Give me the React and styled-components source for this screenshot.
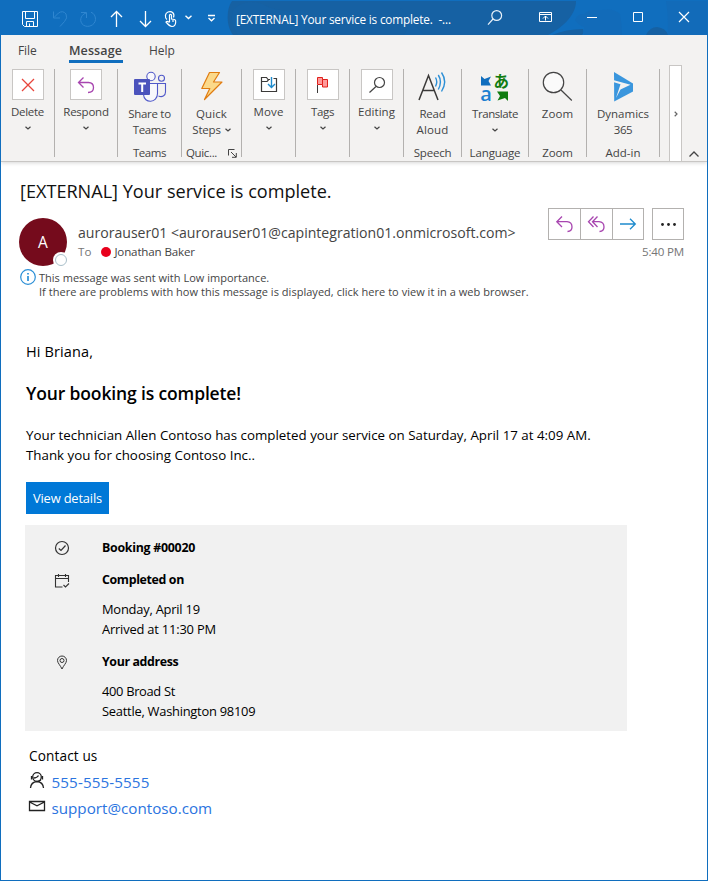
import React from 'react';
import styled, { createGlobalStyle } from 'styled-components';

const Global = createGlobalStyle`
  *, *::before, *::after { box-sizing: border-box; }
  body { margin: 0; background: #fff; font-family: "Open Sans", "Noto Sans", sans-serif; }
  svg { display: block; flex: none; overflow: visible; }
`;

/* ---------- primitives ---------- */

const Text = styled.span`
  font-size: ${p => p.$size || 11.5}px;
  line-height: ${p => p.$lh || 16}px;
  letter-spacing: ${p => p.$ls || 0}px;
  font-weight: ${p => p.$weight || 400};
  color: ${p => p.$color || 'inherit'};
  white-space: pre;
`;

function Icon({ box, children, ...rest }) {
  const [, , w, h] = box.split(' ');
  return (
    <svg width={w} height={h} viewBox={box} fill="none" {...rest}>
      {children}
    </svg>
  );
}

const Window = styled.div`
  width: 708px;
  height: 881px;
  border: 1px solid #106ebe;
  background: #fff;
  display: flex;
  flex-direction: column;
  overflow: hidden;
`;

/* ---------- title bar ---------- */

const TitleBar = styled.header`
  position: relative;
  height: 34px;
  flex: none;
  display: flex;
  align-items: stretch;
  padding: 0 4px 0 14px;
  background: #106ebe;
  color: #fff;
`;

const Backdrop = styled.svg`
  position: absolute;
  inset: 0;
`;

const Slot = styled.div`
  position: relative;
  width: ${p => p.$w}px;
  flex: none;
  display: flex;
  justify-content: center;
  padding-top: ${p => p.$top}px;
`;

const Caption = styled.div`
  position: relative;
  flex: 1;
  display: flex;
  align-items: flex-start;
  padding: 9.500px 0 0 11px;
`;

function TitleArea() {
  const s = { stroke: '#fff' };
  return (
    <TitleBar>
      <Backdrop width="706" height="34" viewBox="1 1 706 34" preserveAspectRatio="none">
        <path d="M232 1C226 9 226 26 233 35H548C565 26 576 14 576 1Z" fill="#1661a3" />
        <path d="M234 9Q246 -2 262 4Q280 14 304 10Q312 22 300 35H238Q228 20 234 9ZM400 8Q415 18 404 35H424Q410 20 400 8Z" fill="#1562a6" />
        <path d="M552 35Q566 29 583 29Q584 33 582 35ZM646 35Q650 27 657 27Q666 28 668 35Z" fill="#1661a3" />
        <path d="M575 20Q578 13 584 14L590 10L602 10Q614 8 620 14Q622 24 622 35H584V27Q578 25 575 20ZM666 1H707V35H668Q668 12 666 1Z" fill="#126bb9" />
      </Backdrop>
      <Slot $w={30} $top={10}>
        <Icon box="22 11 16 16" {...s}>
          <path d="M22.5 11.5H37.5V26.5H24.5L22.5 24.5ZM25.5 11.5V18.5H34.5V11.5M26.5 26.5V21.5H33.5V26.5M29.5 23.5V26.5" />
        </Icon>
      </Slot>
      <Slot $w={29} $top={10}>
        <Icon box="51 11 16 16" stroke="#2f86d0">
          <path d="M52.5 11.5V18H59M53 17.5L57.5 13Q62 10 65 14Q67 18 63.5 21.5L59 26.5" />
        </Icon>
      </Slot>
      <Slot $w={28} $top={10}>
        <Icon box="80 11 16 16" stroke="#2f86d0">
          <path d="M81 12.5H86.5V18M86 13C80 15 79 22 83.500 25.200C88 28 95 25.500 95.500 19.500Q95.500 14 91 12.200" />
        </Icon>
      </Slot>
      <Slot $w={29} $top={10}>
        <Icon box="110 11 13 16" stroke="#fff" strokeWidth="1.3">
          <path d="M116.500 27V11.500M111 17L116.500 11.500L122 17" />
        </Icon>
      </Slot>
      <Slot $w={29} $top={10}>
        <Icon box="139 11 13 16" stroke="#fff" strokeWidth="1.3">
          <path d="M145.500 11V26.500M140 21L145.500 26.500L151 21" />
        </Icon>
      </Slot>
      <Slot $w={20} $top={10}>
        <Icon box="164 11 13 16" stroke="#fff" strokeWidth="1.2">
          <path d="M167 19.500C164.500 17.500 165 13 168 12C172 10.600 175 13.500 173.500 17.500" />
          <path d="M169.500 22V15Q170.500 13.600 171.500 15V19L174.500 19.500Q176 20 175.700 22Q175.500 26.500 172 26.500Q169.500 26.300 166 22Q167 20.500 169.500 22.500M173 20V22" />
        </Icon>
      </Slot>
      <Slot $w={17} $top={14}>
        <Icon box="185 15 7 5" stroke="#fff" strokeWidth="1.4">
          <path d="M185.500 15.700L188.500 18.500L191.500 15.700" />
        </Icon>
      </Slot>
      <Slot $w={28} $top={13}>
        <Icon box="207 14 8 8" stroke="#fff" strokeWidth="1.300">
          <path d="M208 15.500H215M208.500 18L211.500 20.800L214.500 18" />
        </Icon>
      </Slot>
      <Caption>
        <Text $size={11.8} $ls={-0.18}>{'[EXTERNAL] Your service is complete.  -...'}</Text>
      </Caption>
      <Slot $w={46} $top={9}>
        <Icon box="487 10 16 16" stroke="#e8f1f9" strokeWidth="1.2">
          <circle cx="496.700" cy="15.500" r="4.900" />
          <path d="M493 19L488 24.700" />
        </Icon>
      </Slot>
      <Slot $w={55} $top={11}>
        <Icon box="539 12 13 10" stroke="#fff">
          <path d="M539.500 12.500H551.500V21.500H539.500ZM539.500 14.500H551.500M545.500 20.500V16M543 18.500L545.500 16L548 18.500" />
        </Icon>
      </Slot>
      <Slot $w={38} $top={16}>
        <Icon box="587 17 10 1" stroke="#fff"><path d="M587 17.500H597" /></Icon>
      </Slot>
      <Slot $w={54} $top={11}>
        <Icon box="633 12 10 10" stroke="#fff"><path d="M633.500 12.500H642.500V21.500H633.500Z" /></Icon>
      </Slot>
      <Slot $w={38} $top={11}>
        <Icon box="679 12 10 10" stroke="#fff" strokeWidth="1.2"><path d="M679 12L689 22M689 12L679 22" /></Icon>
      </Slot>
    </TitleBar>
  );
}

/* ---------- ribbon ---------- */

const Ribbon = styled.section`
  flex: none;
  height: 127px;
  background: #f3f2f1;
  border-bottom: 1px solid #c8c6c4;
  box-shadow: 0 1px 4px rgba(0, 0, 0, 0.16);
  color: #444;
  display: flex;
  flex-direction: column;
`;

const Tabs = styled.nav`
  display: flex;
  height: 30px;
  padding: 7.5px 0 0 17px;
`;

const Tab = styled.div`
  width: ${p => p.$w}px;
  height: 20.500px;
  display: flex;
`;

const ActiveTab = styled(Tab)`
  width: 54px;
  margin-right: 26px;
  border-bottom: 3px solid #106ebe;
`;

const Groups = styled.div`
  display: flex;
  align-items: flex-start;
`;

const Group = styled.div`
  width: ${p => p.$w}px;
  height: 96px;
  padding-top: 4px;
  flex: none;
  display: flex;
  flex-direction: column;
  align-items: center;
`;

const Divider = styled.div`
  width: 1px;
  height: 88px;
  margin-top: 4px;
  flex: none;
  background: #b3b1af;
`;

const TileIcon = styled.div`
  width: 32px;
  height: 31px;
  margin-bottom: 4px;
  border: 1px solid #c8c6c4;
  background: #fff;
  display: flex;
  align-items: center;
  justify-content: center;
`;

const LargeIcon = styled.div`
  height: 36.500px;
  display: flex;
  align-items: flex-start;
  padding-top: 3px;
`;

const Line = styled.div`
  height: 16px;
  display: flex;
  align-items: center;
  gap: 4px;
`;

const GroupName = styled.div`
  height: 16px;
  margin-top: auto;
  display: flex;
  align-items: center;
  gap: 11px;
`;

const ScrollRight = styled.div`
  width: 13px;
  height: 96px;
  margin-left: 9px;
  border: 1px solid #c8c6c4;
  border-bottom: 0;
  background: #fff;
  display: flex;
  align-items: center;
  justify-content: center;
`;

const Collapse = styled.div`
  height: 96px;
  padding: 86px 0 0 7px;
`;

const Chevron = () => (
  <Icon box="0 0 6 4" stroke="#444" strokeWidth="1.200"><path d="M0.500 0.700L3 2.900L5.500 0.700" /></Icon>
);

function SmallGroup({ w, label, ls, children }) {
  return (
    <>
      <Group $w={w}>
        <TileIcon>{children}</TileIcon>
        <Line><Text $ls={ls}>{label}</Text></Line>
        <Line><Chevron /></Line>
      </Group>
      <Divider />
    </>
  );
}

function LargeGroup({ w, icon, lines, name, nameLs, chevronInline, chevronBelow, launcher }) {
  return (
    <>
      <Group $w={w}>
        <LargeIcon>{icon}</LargeIcon>
        {lines.map(([t, ls], i) => (
          <Line key={t}>
            <Text $ls={ls}>{t}</Text>
            {chevronInline && i === lines.length - 1 && <Chevron />}
          </Line>
        ))}
        {chevronBelow && <Line><Chevron /></Line>}
        <GroupName>
          <Text $ls={nameLs}>{name}</Text>
          {launcher && (
            <Icon box="0 0 9 9" stroke="#444"><path d="M0.500 6.500V0.500H6.500M3 3L8 8M8.300 4V8.300H4" /></Icon>
          )}
        </GroupName>
      </Group>
      <Divider />
    </>
  );
}

const TeamsIcon = () => (
  <Icon box="134 72 32 30" stroke="#5059c9" strokeWidth="1.100">
    <circle cx="151" cy="76.500" r="4.200" fill="#f8f8fc" />
    <circle cx="161.500" cy="78.200" r="3" />
    <path d="M157.500 83.500H165.500V92C165.500 96 162 97.500 158.500 96" />
    <path d="M144 83.500H157.500V93.500C157.500 103.500 144 104 143.500 94.500" fill="#f8f8fc" />
    <rect x="134" y="79" width="16" height="16" rx="1" fill="#4b53bc" stroke="none" />
    <path d="M138.500 83.500H146M142.200 83.500V92" stroke="#fff" strokeWidth="2" />
  </Icon>
);

const BoltIcon = () => (
  <Icon box="201 73 22 28" stroke="#e07c10" strokeWidth="1.200" strokeLinejoin="round">
    <path d="M209.500 73.500H219.500L213.500 83H222L204.500 100.500L209.800 89.500H201.800Z" fill="#fbd98a" />
  </Icon>
);

const ReadAloudIcon = () => (
  <Icon box="420 73 28 29">
    <path d="M420 101L429.500 76.500L439 101M423.800 91.500H435.300" stroke="#3b3a39" strokeWidth="1.500" />
    <path d="M436.500 78.500Q439 82.500 436.500 87.500M439.300 76Q443.500 82.500 439.300 90.500M442.500 73.500Q448.800 82.500 442.500 92.500" stroke="#2b8fd6" strokeWidth="1.400" />
  </Icon>
);

const Kana = styled.text`
  font: 700 15.500px "Noto Sans CJK JP", sans-serif;
`;

const Latin = styled.text`
  font: 600 20px "Open Sans", sans-serif;
`;

const TranslateIcon = () => (
  <Icon box="480 72 30 30">
    <path d="M481 76L484.500 79L491 76.500L488.500 81L491 85.500H481Z" fill="#106ebe" />
    <Latin x="480.300" y="101" fill="#1b7fd0">a</Latin>
    <Kana x="493.500" y="87" fill="#107c10">あ</Kana>
    <path d="M497 91.500H508V101L505 98L497.500 100.500L500 96Z" fill="#107c10" />
  </Icon>
);

const ZoomIcon = () => (
  <Icon box="543 73 31 29" stroke="#444" strokeWidth="1.200">
    <circle cx="554.500" cy="83.500" r="10.200" fill="#fafafa" />
    <path d="M562 91L572.800 101.500" />
  </Icon>
);

const DynamicsIcon = () => (
  <Icon box="613 72 20 30">
    <path d="M614 72L633 83.500V91.500L614.200 101.500Z" fill="#3a96dd" />
    <path d="M614 80.200L630.500 84.800L620.500 89.500L616 98L620.500 84.300L614 82.300Z" fill="#f3f2f1" />
  </Icon>
);

function RibbonArea() {
  return (
    <Ribbon>
      <Tabs>
        <Tab $w={51}><Text $size={12} $ls={-0.08}>File</Text></Tab>
        <ActiveTab><Text $size={12.5} $weight={600} $ls={0.1}>Message</Text></ActiveTab>
        <Tab><Text $size={12}>Help</Text></Tab>
      </Tabs>
      <Groups>
        <SmallGroup w={53} label="Delete" ls={-0.29}>
          <Icon box="22 78 12 12" stroke="#e8453c" strokeWidth="1.300"><path d="M22 78L34 90M34 78L22 90" /></Icon>
        </SmallGroup>
        <SmallGroup w={62} label="Respond" ls={-0.23}>
          <Icon box="78 76 16 16" stroke="#a846b0" strokeWidth="1.300">
            <path d="M83.500 76.500L78.500 81.500L83.500 86.500M78.500 81.500H88.500Q93.500 81.800 93.500 86.500Q93.500 91.500 88 91.500" />
          </Icon>
        </SmallGroup>
        <LargeGroup w={63} icon={<TeamsIcon />} lines={[['Share to', -0.3], ['Teams', -0.4]]} name="Teams" nameLs={-0.45} />
        <LargeGroup w={59} icon={<BoltIcon />} lines={[['Quick', 0.1], ['Steps', -0.22]]} chevronInline name="Quic..." nameLs={-0.35} launcher />
        <SmallGroup w={53} label="Move" ls={0.13}>
          <Icon box="261 76 16 15" stroke="#3b3a39" strokeWidth="1.200">
            <path d="M273.500 77.500H276.500V90.500H261.500V76.500H266.500L268 78.500H270M261.500 80.500H267L268.500 79" />
            <path d="M271.500 76V86.500M268 83L271.500 86.500L275 83" stroke="#1e8bcd" strokeWidth="1.400" />
          </Icon>
        </SmallGroup>
        <SmallGroup w={53} label="Tags" ls={-0.3}>
          <Icon box="317 76 12 16">
            <path d="M317.500 76.500H322.500V78.500H327.500V86H322.500V83.500H317.500Z" fill="#ff9a9a" stroke="#e0201b" />
            <path d="M322.500 78.500V83.500" stroke="#e0201b" />
            <path d="M317.500 84V92" stroke="#3b3a39" />
          </Icon>
        </SmallGroup>
        <SmallGroup w={53} label="Editing" ls={0.05}>
          <Icon box="369 76 16 16" stroke="#444" strokeWidth="1.200">
            <circle cx="379.500" cy="81.500" r="5" />
            <path d="M376 85.500L369.500 91.500" />
          </Icon>
        </SmallGroup>
        <LargeGroup w={57} icon={<ReadAloudIcon />} lines={[['Read', -0.25], ['Aloud', 0.15]]} name="Speech" nameLs={-0.2} />
        <LargeGroup w={66} icon={<TranslateIcon />} lines={[['Translate', -0.42]]} chevronBelow name="Language" nameLs={-0.12} />
        <LargeGroup w={57} icon={<ZoomIcon />} lines={[['Zoom', 0.1]]} name="Zoom" nameLs={-0.2} />
        <LargeGroup w={72} icon={<DynamicsIcon />} lines={[['Dynamics', 0], ['365', -0.4]]} name="Add-in" nameLs={0} />
        <ScrollRight>
          <Icon box="0 0 4 6" stroke="#666" strokeWidth="1.200"><path d="M0.700 0.800L3 3L0.700 5.200" /></Icon>
        </ScrollRight>
        <Collapse>
          <Icon box="689 151 10 6" stroke="#444" strokeWidth="1.300"><path d="M689.500 156.500L694 152L698.500 156.500" /></Icon>
        </Collapse>
      </Groups>
    </Ribbon>
  );
}

/* ---------- message header ---------- */

const MessageHeader = styled.section`
  height: 141px;
  flex: none;
  padding: 17px 23px 0 18px;
  display: flex;
  flex-direction: column;
`;

const Subject = styled.h1`
  margin: 0;
  height: 29px;
  padding-left: 1px;
  font-weight: 400;
  display: flex;
`;

const SenderRow = styled.div`
  height: 60px;
  display: flex;
  align-items: flex-start;
`;

const Avatar = styled.div`
  position: relative;
  width: 48px;
  height: 48px;
  margin-top: 10px;
  border-radius: 50%;
  background: #750b1c;
  color: #fff;
  display: flex;
  align-items: center;
  justify-content: center;
`;

const Presence = styled.span`
  position: absolute;
  left: 36px;
  top: 36px;
  width: 12px;
  height: 12px;
  border-radius: 50%;
  border: 1px solid #a9bfca;
  background: #fff;
  box-shadow: 0 0 0 2px #fff;
`;

const Sender = styled.div`
  flex: 1;
  padding: 15px 0 0 11px;
  display: flex;
  flex-direction: column;
  color: #444;
`;

const Recipient = styled.div`
  height: 18px;
  display: flex;
  align-items: center;
`;

const StatusDot = styled.i`
  width: 10px;
  height: 10px;
  margin: 0 3px 1px 10px;
  border-radius: 50%;
  background: #e8001c;
`;

const Actions = styled.div`
  display: flex;
  flex-direction: column;
  align-items: flex-end;
`;

const Buttons = styled.div`
  display: flex;
  gap: 8px;
  margin-bottom: 4px;
`;

const ButtonSet = styled.div`
  height: 32px;
  border: 1px solid #b3b1af;
  display: flex;
`;

const ActionButton = styled.div`
  width: ${p => p.$w}px;
  display: flex;
  align-items: center;
  justify-content: center;
  & + & { border-left: 1px solid #b3b1af; }
`;

const InfoBar = styled.div`
  display: flex;
  gap: 3px;
  margin: 1px 0 0 1px;
  color: #444;
`;

const InfoLines = styled.div`
  display: flex;
  flex-direction: column;
  padding-top: 1.500px;
`;

function HeaderArea() {
  return (
    <MessageHeader>
      <Subject><Text $size={18.1} $lh={24} $color="#111">[EXTERNAL] Your service is complete.</Text></Subject>
      <SenderRow>
        <Avatar>
          <Text $size={15.5} $lh={20}>A</Text>
          <Presence />
        </Avatar>
        <Sender>
          <Text $size={14.1} $lh={20} $ls={-0.01}>{'aurorauser01 <aurorauser01@capintegration01.onmicrosoft.com>'}</Text>
          <Recipient>
            <Text $size={11.6} $color="#767676">To</Text>
            <StatusDot />
            <Text $size={11.6} $ls={-0.16}>Jonathan Baker</Text>
          </Recipient>
        </Sender>
        <Actions>
          <Buttons>
            <ButtonSet>
              <ActionButton $w={31}>
                <Icon box="556 216 17 16" stroke="#a846b0" strokeWidth="1.300">
                  <path d="M562 216.500L556.800 221.700L562 227M556.800 221.700H567Q572 222 572 227Q572 231.300 567.500 231.500" />
                </Icon>
              </ActionButton>
              <ActionButton $w={32}>
                <Icon box="588 216 17 16" stroke="#a846b0" strokeWidth="1.300">
                  <path d="M593.500 216.500L588.500 221.700L593.500 227M597.500 216.500L592.500 221.700L597.500 227M592.500 221.700H599Q604 222 604 227Q604 231.300 599.500 231.500" />
                </Icon>
              </ActionButton>
              <ActionButton $w={31}>
                <Icon box="620 218 16 12" stroke="#1e8bcd" strokeWidth="1.300">
                  <path d="M620 224H635M630 218.700L635.300 224L630 229.300" />
                </Icon>
              </ActionButton>
            </ButtonSet>
            <ButtonSet>
              <ActionButton $w={30}>
                <Icon box="0 0 15 3">
                  <circle cx="1.500" cy="1.500" r="1.400" fill="#222" />
                  <circle cx="7.500" cy="1.500" r="1.400" fill="#222" />
                  <circle cx="13.500" cy="1.500" r="1.400" fill="#222" />
                </Icon>
              </ActionButton>
            </ButtonSet>
          </Buttons>
          <Text $size={11.6} $ls={-0.2} $color="#767676">5:40 PM</Text>
        </Actions>
      </SenderRow>
      <InfoBar>
        <Icon box="20 270 16 16" stroke="#2b8fd6" strokeWidth="1.200">
          <circle cx="28" cy="278" r="7.300" />
          <path d="M28 277V282M28 274V275.500" strokeWidth="1.700" />
        </Icon>
        <InfoLines>
          <Text $size={11} $lh={14} $ls={0.01}>This message was sent with Low importance.</Text>
          <Text $size={11} $lh={14} $ls={0.03}>If there are problems with how this message is displayed, click here to view it in a web browser.</Text>
        </InfoLines>
      </InfoBar>
    </MessageHeader>
  );
}

/* ---------- message body ---------- */

const Body = styled.main`
  padding: 39px 0 0 24px;
  color: #000;
  display: flex;
  flex-direction: column;
  align-items: flex-start;
`;

const Paragraph = styled.p`
  margin: 0 0 0 1px;
  padding-top: ${p => p.$gap}px;
  display: flex;
  flex-direction: column;
`;

const DetailsButton = styled.div`
  width: 83px;
  height: 32px;
  margin: 17px 0 11px 1px;
  background: #0078d7;
  color: #fff;
  display: flex;
  align-items: center;
  justify-content: center;
`;

const Card = styled.section`
  width: 602px;
  height: 206px;
  padding: 13px 0 0 30px;
  background: #f1f1f1;
`;

const CardRow = styled.div`
  display: grid;
  grid-template-columns: 47px auto;
  margin-bottom: 12px;
`;

const RowIcon = styled.div`
  width: 14px;
  padding-top: 3px;
  display: flex;
  justify-content: center;
`;

const RowText = styled.div`
  display: flex;
  flex-direction: column;
`;

const RowLines = styled.div`
  margin: 9px 0 1px;
  display: flex;
  flex-direction: column;
`;

const Contact = styled.section`
  margin-left: 4px;
  padding-top: 15px;
  display: flex;
  flex-direction: column;
`;

const Phones = styled.div`
  margin-top: 2.500px;
`;

const ContactRow = styled.div`
  height: 26px;
  display: flex;
  align-items: center;
  gap: 6.500px;
`;

function DetailRow({ icon, title, ls, lines }) {
  return (
    <CardRow>
      <RowIcon>{icon}</RowIcon>
      <RowText>
        <Text $size={12.4} $weight={700} $lh={20} $ls={ls}>{title}</Text>
        {lines && (
          <RowLines>
            {lines.map(([t, l]) => <Text key={t} $size={12.9} $lh={20} $ls={l}>{t}</Text>)}
          </RowLines>
        )}
      </RowText>
    </CardRow>
  );
}

function BodyArea() {
  return (
    <Body>
      <Paragraph $gap={0}><Text $size={14.5} $lh={20} $ls={0.12}>Hi Briana,</Text></Paragraph>
      <Paragraph $gap={19}><Text $size={17.5} $weight={600} $lh={24} $ls={-0.14}>Your booking is complete!</Text></Paragraph>
      <Paragraph $gap={20}>
        <Text $size={13.33} $lh={20}>Your technician Allen Contoso has completed your service on Saturday, April 17 at 4:09 AM.</Text>
        <Text $size={13.33} $lh={20}>Thank you for choosing Contoso Inc..</Text>
      </Paragraph>
      <DetailsButton><Text $size={12.9} $ls={-0.17}>View details</Text></DetailsButton>
      <Card>
        <DetailRow
          title="Booking #00020" ls={-0.28}
          icon={(
            <Icon box="55 542 14 14" stroke="#333" strokeWidth="1.200">
              <circle cx="62" cy="549" r="6.500" /><path d="M58.800 549.500L61 551.500L65.500 546.500" />
            </Icon>
          )}
        />
        <DetailRow
          title="Completed on" ls={-0.36}
          lines={[['Monday, April 19', -0.22], ['Arrived at 11:30 PM', -0.19]]}
          icon={(
            <Icon box="55 573 14 14" stroke="#333" strokeWidth="1.100">
              <path d="M62.500 587H55.500V575.500H68.500V582M55.500 578.500H68.500M58.500 574V577M65.500 574V577M63.500 585L65.500 587L69 583.500" />
            </Icon>
          )}
        />
        <DetailRow
          title="Your address" ls={-0.38}
          lines={[['400 Broad St', -0.33], ['Seattle, Washington 98109', -0.25]]}
          icon={(
            <Icon box="57 655 10 14" stroke="#333" strokeWidth="1">
              <path d="M62 669C60.500 665.500 57.500 663 57.500 660.500A4.500 4.500 0 0 1 66.500 660.500C66.500 663 63.500 665.500 62 669Z" />
              <circle cx="62" cy="660.500" r="2" />
            </Icon>
          )}
        />
      </Card>
      <Contact>
        <Text $size={13.6} $lh={20} $ls={0.13}>Contact us</Text>
        <Phones>
          <ContactRow>
            <Icon box="29 774 16 16" stroke="#222" strokeWidth="1.300">
              <circle cx="37" cy="777" r="4.300" />
              <path d="M31.500 776V779.500M42.500 776V779.500M33.500 778Q37 778 38.500 775.500M41 780L38 781.500M30.500 788Q31 782 37 781.500Q43 782 43.500 788" />
            </Icon>
            <Text $size={15.2} $lh={20} $ls={0.11} $color="#2b74e0">555-555-5555</Text>
          </ContactRow>
          <ContactRow>
            <Icon box="29 799 16 14" stroke="#222" strokeWidth="1.300">
              <path d="M29.500 799.500H44.500V808.500H29.500ZM29.500 800L37 803.800L44.500 800" />
            </Icon>
            <Text $size={15.2} $lh={20} $color="#2b74e0">support@contoso.com</Text>
          </ContactRow>
        </Phones>
      </Contact>
    </Body>
  );
}

export default function App() {
  return (
    <>
      <Global />
      <Window>
        <TitleArea />
        <RibbonArea />
        <HeaderArea />
        <BodyArea />
      </Window>
    </>
  );
}
